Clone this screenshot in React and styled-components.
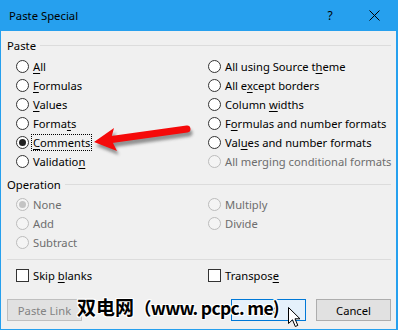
import React from 'react';
import styled, { createGlobalStyle } from 'styled-components';

const Global = createGlobalStyle`
  html, body { margin: 0; padding: 0; background: #f0f0f0; }
  body { font-family: "Noto Sans", "Open Sans", sans-serif; font-size: 11px; color: #000; }
`;

const BLUE = '#26a0ee';
const FONT = '"Noto Sans", "Open Sans", sans-serif';

const Dialog = styled.div`
  position: relative;
  width: 398px;
  height: 330px;
  box-sizing: border-box;
  border-left: 1px solid ${BLUE};
  border-right: 2px solid ${BLUE};
  border-bottom: 1px solid ${BLUE};
  background: #f0f0f0;
  display: flex;
  flex-direction: column;
  overflow: hidden;
`;

const TitleBar = styled.div`
  height: 31px;
  flex: none;
  background: ${BLUE};
  display: flex;
  align-items: center;
  padding-left: 8px;
`;

const Title = styled.div`
  font-size: 11.3px;
  color: #000;
  flex: 1;
`;

const TitleButton = styled.div`
  width: 44px;
  height: 31px;
  display: flex;
  align-items: center;
  justify-content: center;
  font-size: 12px;
  color: #000;
`;

const Body = styled.div`
  flex: 1;
  padding: 7px 5px 0 6px;
  display: flex;
  flex-direction: column;
`;

const Legend = styled.div`
  display: flex;
  align-items: center;
  height: 15px;
  margin-top: ${p => p.$top || 0}px;
  font-size: 11.3px;
  span { line-height: 15px; }
  &::after {
    content: '';
    flex: 1;
    height: 1px;
    background: #dcdcdc;
    margin-left: 4px;
  }
`;

const OptionGrid = styled.div`
  display: grid;
  grid-template-columns: 192px 1fr;
  grid-auto-rows: 19px;
  padding-left: 9px;
  margin-top: ${p => p.$top || 0}px;
`;

const Option = styled.label`
  display: flex;
  align-items: center;
  gap: 4px;
  white-space: nowrap;
  font-size: 11.2px;
  color: ${p => (p.$disabled ? '#6d6d6d' : '#000')};
`;

const Radio = styled.span`
  width: 13px;
  height: 13px;
  box-sizing: border-box;
  border-radius: 50%;
  border: 1px solid ${p => (p.$disabled ? '#bcbcbc' : '#333')};
  background: ${p => (p.$disabled ? '#f4f4f4' : '#fff')};
  display: flex;
  align-items: center;
  justify-content: center;
  flex: none;
  &::after {
    content: '';
    display: ${p => (p.$checked ? 'block' : 'none')};
    width: 7px;
    height: 7px;
    border-radius: 50%;
    background: ${p => (p.$disabled ? '#c4c4c4' : '#222')};
  }
`;

const Check = styled.span`
  width: 13px;
  height: 13px;
  box-sizing: border-box;
  border: 1px solid #333;
  background: #fff;
  flex: none;
`;

const Text = styled.span`
  line-height: 15px;
  padding: 0 1px;
  margin-left: -1px;
  outline: ${p => (p.$focus ? '1px dotted #000' : 'none')};
  outline-offset: 0;
`;

const Key = styled.u`
  text-decoration: underline;
  text-underline-offset: 2px;
`;

const Separator = styled.div`
  height: 1px;
  background: #dcdcdc;
  margin-top: ${p => p.$top || 0}px;
`;

const ButtonRow = styled.div`
  display: flex;
  gap: 10px;
  margin-top: 14px;
`;

const Spacer = styled.div`
  flex: 1;
`;

const Button = styled.button`
  width: 75px;
  height: 22px;
  box-sizing: border-box;
  padding: 0;
  font-family: ${FONT};
  font-size: 11.2px;
  border: 1px solid ${p => (p.$default ? '#0078d7' : p.disabled ? '#bfbfbf' : '#adadad')};
  background: ${p => (p.$default ? '#e5f1fb' : '#e1e1e1')};
  color: ${p => (p.disabled ? '#838383' : '#000')};
`;

const Overlay = styled.svg`
  position: absolute;
  left: 0;
  top: 0;
  pointer-events: none;
`;

const Watermark = styled.div`
  position: absolute;
  left: 76px;
  top: 294px;
  font-family: "Noto Sans CJK SC", sans-serif;
  font-weight: 700;
  font-size: 19px;
  line-height: 26px;
  color: #000;
  white-space: nowrap;
  text-shadow: 1px 0 #fff, -1px 0 #fff, 0 1px #fff, 0 -1px #fff, 1px 1px #fff, -1px -1px #fff, 1px -1px #fff, -1px 1px #fff;
  pointer-events: none;
`;

const WatermarkLatin = styled.span`
  font-size: 17.5px;
  letter-spacing: -0.7px;
`;

const Cursor = styled.svg`
  position: absolute;
  left: 287px;
  top: 307px;
`;

const pasteLeft = [
  { k: 'all', t: [<Key key="a">A</Key>, 'll'] },
  { k: 'formulas', t: [<Key key="f">F</Key>, 'ormulas'] },
  { k: 'values', t: [<Key key="v">V</Key>, 'alues'] },
  { k: 'formats', t: ['Forma', <Key key="t">t</Key>, 's'] },
  { k: 'comments', t: [<Key key="c">C</Key>, 'omments'], checked: true, focus: true },
  { k: 'validation', t: ['Validatio', <Key key="n">n</Key>] },
];

const pasteRight = [
  { k: 'theme', t: ['All using Source t', <Key key="h">h</Key>, 'eme'] },
  { k: 'borders', t: ['All e', <Key key="x">x</Key>, 'cept borders'] },
  { k: 'widths', t: ['Column ', <Key key="w">w</Key>, 'idths'] },
  { k: 'fnum', t: ['F', <Key key="o">o</Key>, 'rmulas and number formats'] },
  { k: 'vnum', t: ['Val', <Key key="u">u</Key>, 'es and number formats'] },
  { k: 'merge', t: ['All merging conditional formats'], disabled: true },
];

const opLeft = [
  { k: 'none', t: ['None'], checked: true },
  { k: 'add', t: ['Add'] },
  { k: 'sub', t: ['Subtract'] },
];
const opRight = [
  { k: 'mul', t: ['Multiply'] },
  { k: 'div', t: ['Divide'] },
  null,
];

function RadioOption({ item }) {
  if (!item) return <span />;
  return (
    <Option $disabled={item.disabled}>
      <Radio $checked={item.checked} $disabled={item.disabled} />
      <Text $focus={item.focus}>{item.t}</Text>
    </Option>
  );
}

function interleave(a, b) {
  const out = [];
  for (let i = 0; i < a.length; i++) {
    out.push(a[i]);
    out.push(b[i]);
  }
  return out;
}

export default function App() {
  const paste = interleave(pasteLeft, pasteRight);
  const ops = interleave(
    opLeft.map(o => ({ ...o, disabled: true })),
    opRight.map(o => (o ? { ...o, disabled: true } : null))
  );
  return (
    <>
      <Global />
      <Dialog>
        <TitleBar>
          <Title>Paste Special</Title>
          <TitleButton>?</TitleButton>
          <TitleButton>
            <svg width="11" height="11" viewBox="0 0 11 11">
              <path d="M0.5 0.5 L10.5 10.5 M10.5 0.5 L0.5 10.5" stroke="#000" strokeWidth="1" />
            </svg>
          </TitleButton>
        </TitleBar>
        <Body>
          <Legend><span>Paste</span></Legend>
          <OptionGrid $top={4}>
            {paste.map((it, i) => <RadioOption key={i} item={it} />)}
          </OptionGrid>
          <Legend $top={6}><span>Operation</span></Legend>
          <OptionGrid $top={3}>
            {ops.map((it, i) => <RadioOption key={i} item={it} />)}
          </OptionGrid>
          <Separator $top={7} />
          <OptionGrid $top={6}>
            <Option>
              <Check />
              <Text>Skip <Key>b</Key>lanks</Text>
            </Option>
            <Option>
              <Check />
              <Text>Transpos<Key>e</Key></Text>
            </Option>
          </OptionGrid>
          <ButtonRow>
            <Button disabled>Paste Link</Button>
            <Spacer />
            <Button $default>OK</Button>
            <Button>Cancel</Button>
          </ButtonRow>
        </Body>
        <Overlay width="398" height="330" viewBox="0 0 398 330">
          <defs>
            <filter id="blur" x="-20%" y="-50%" width="140%" height="200%">
              <feGaussianBlur stdDeviation="1.6" />
            </filter>
          </defs>
          <g transform="translate(2 4)" filter="url(#blur)" opacity="0.55">
            <path d="M108 140 L186 129" stroke="#444" strokeWidth="7" strokeLinecap="round" />
            <polygon points="93,142 113,128 110,139 116,151" fill="#444" />
          </g>
          <path d="M107 140 L186 129" stroke="#f50a0a" strokeWidth="7" strokeLinecap="round" />
          <polygon points="93,142 113,128 110,139 116,151" fill="#f50a0a" />
        </Overlay>
        <Watermark>双电网<WatermarkLatin>（www. pcpc. me)</WatermarkLatin></Watermark>
        <Cursor width="14" height="22" viewBox="0 0 14 22">
          <path d="M0.5 0.5 L0.5 16.5 L4.5 12.8 L7.3 19.5 L9.8 18.4 L7 11.8 L12 11.8 Z" fill="#fff" stroke="#000" strokeWidth="1" strokeLinejoin="miter" />
        </Cursor>
      </Dialog>
    </>
  );
}
